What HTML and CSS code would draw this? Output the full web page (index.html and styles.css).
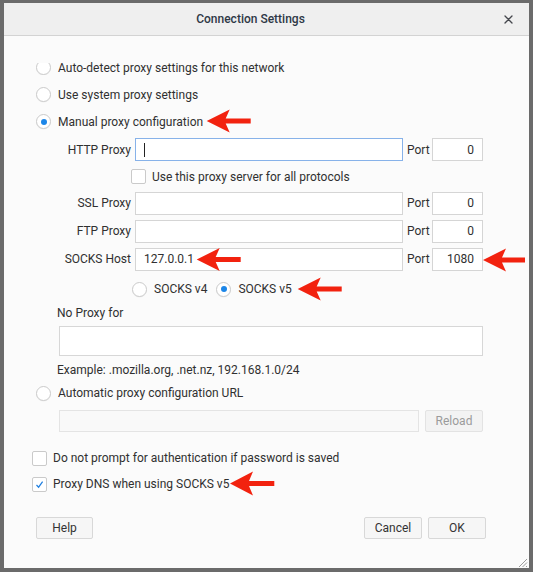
FILE: index.html
```html
<!DOCTYPE html>
<html>
<head>
<meta charset="utf-8">
<title>Connection Settings</title>
<link rel="stylesheet" href="styles.css">
</head>
<body>
<div class="window">
  <div class="titlebar">
    <div class="title">Connection Settings</div>
    <div class="close">
      <svg width="9" height="9" viewBox="0 0 9 9"><path d="M1 1L8 8M8 1L1 8" stroke="#45474d" stroke-width="1.3" stroke-linecap="round"/></svg>
    </div>
  </div>
  <div class="content">
    <div class="radio-row r1"><span class="radio-clip"><span class="radio"></span></span><span>Auto-detect proxy settings for this network</span></div>
    <div class="radio-row r2"><span class="radio"></span><span>Use system proxy settings</span></div>
    <div class="radio-row r3"><span class="radio on"></span><span>Manual proxy configuration</span></div>

    <div class="proxy-row http">
      <span class="plabel">HTTP Proxy</span>
      <div class="input host focus"><span class="caret"></span></div>
      <span class="port-label">Port</span>
      <div class="input port">0</div>
    </div>
    <div class="check-row share"><span class="check"></span><span>Use this proxy server for all protocols</span></div>
    <div class="proxy-row">
      <span class="plabel">SSL Proxy</span>
      <div class="input host"></div>
      <span class="port-label">Port</span>
      <div class="input port">0</div>
    </div>
    <div class="proxy-row">
      <span class="plabel">FTP Proxy</span>
      <div class="input host"></div>
      <span class="port-label">Port</span>
      <div class="input port">0</div>
    </div>
    <div class="proxy-row">
      <span class="plabel">SOCKS Host</span>
      <div class="input host">127.0.0.1</div>
      <span class="port-label">Port</span>
      <div class="input port">1080</div>
    </div>
    <div class="socks-row">
      <span class="radio"></span><span class="v4">SOCKS v4</span>
      <span class="radio on"></span><span>SOCKS v5</span>
    </div>

    <div class="noproxy-label">No Proxy for</div>
    <div class="textarea"></div>
    <div class="example">Example: .mozilla.org, .net.nz, 192.168.1.0/24</div>

    <div class="radio-row auto"><span class="radio"></span><span>Automatic proxy configuration URL</span></div>
    <div class="url-row">
      <div class="input url disabled"></div>
      <div class="btn reload">Reload</div>
    </div>

    <div class="check-row prompt"><span class="check"></span><span>Do not prompt for authentication if password is saved</span></div>
    <div class="check-row dns">
      <span class="check"><svg width="13" height="13" viewBox="0 0 13 13"><path d="M3.5 7L5.6 9.2L9.6 3.6" fill="none" stroke="#1f7fe0" stroke-width="1.2"/></svg></span>
      <span>Proxy DNS when using SOCKS v5</span>
    </div>

    <div class="buttons">
      <div class="btn help">Help</div>
      <div class="right">
        <div class="btn cancel">Cancel</div>
        <div class="btn ok">OK</div>
      </div>
    </div>
  </div>

  <svg class="overlay" width="525" height="565" viewBox="0 0 525 565">
    <g fill="#f2220f">
      <polygon points="202.7,118 225.7,106.5 221.7,115.5 246.7,115.5 246.7,120.5 221.7,120.5 225.7,129.5"/>
      <polygon points="192.7,256.5 215.7,245 211.7,254 236.7,254 236.7,259 211.7,259 215.7,268"/>
      <polygon points="479,257 502,245.5 498,254.5 521,254.5 521,259.5 498,259.5 502,268.5"/>
      <polygon points="293.7,286 316.7,274.5 312.7,283.5 337.7,283.5 337.7,288.5 312.7,288.5 316.7,297.5"/>
      <polygon points="226,480.5 249,468.5 245,478 270.3,478 270.3,483 245,483 249,492.5"/>
    </g>
    <g stroke="#9a9a9a" stroke-width="1">
      <path d="M523 556L515 564M523 559.5L518.5 564M523 563L522 564"/>
    </g>
  </svg>
</div>
</body>
</html>
```

FILE: styles.css
```css
html, body {
  margin: 0;
}

body {
  background: #6b6b6b;
  padding: 3px 4px 4px 4px;
  height: 572px;
  box-sizing: border-box;
  font-family: Roboto, "Liberation Sans", Arial, sans-serif;
  font-size: 12px;
  color: #303030;
}

.window {
  width: 525px;
  height: 565px;
  background: #fbfbfb;
  position: relative;
  display: flex;
  flex-direction: column;
  overflow: hidden;
}

.titlebar {
  height: 32px;
  flex-shrink: 0;
  background: #efefef;
  border-bottom: 1px solid #d3d3d3;
  display: flex;
  align-items: center;
}

.title {
  flex: 1;
  text-align: center;
  padding-left: 5px;
  font-weight: 500;
  font-size: 12px;
  color: #2e3846;
}

.close {
  width: 32px;
  margin-right: 5px;
  display: flex;
  justify-content: center;
  align-items: center;
}

.close svg {
  display: block;
}

.content {
  padding: 19px 0 0 28px;
  display: flex;
  flex-direction: column;
}

.radio-row {
  display: flex;
  align-items: center;
  padding-left: 4px;
}

.r1 { height: 26px; }
.r2 { height: 27px; }
.r3 { height: 27px; }

.radio-clip {
  width: 15px;
  height: 12px;
  overflow: hidden;
  align-self: flex-end;
  margin-bottom: 6px;
  margin-right: 7px;
  display: flex;
  align-items: flex-end;
  flex-shrink: 0;
}

.radio-clip .radio {
  margin-right: 0;
}

.radio {
  width: 15px;
  height: 15px;
  box-sizing: border-box;
  border: 1px solid #cbcbcb;
  border-radius: 50%;
  background: #fff;
  margin-right: 7px;
  flex-shrink: 0;
  display: flex;
  align-items: center;
  justify-content: center;
  box-shadow: 0 0.5px 0.5px rgba(0, 0, 0, 0.06);
}

.radio.on::after {
  content: "";
  width: 6px;
  height: 6px;
  border-radius: 50%;
  background: #1c86e8;
}

.proxy-row {
  display: flex;
  align-items: center;
  height: 28px;
  margin-left: 25px;
}

.proxy-row.http {
  height: 29px;
}

.plabel {
  width: 74px;
  text-align: right;
  margin-right: 4px;
  flex-shrink: 0;
}

.input {
  height: 23px;
  box-sizing: border-box;
  border: 1px solid #d5d5d5;
  background: #fff;
  display: flex;
  align-items: center;
}

.input.host {
  width: 268px;
  padding-left: 8px;
}

.input.focus {
  border-color: #87b2e9;
}

.caret {
  width: 1px;
  height: 14px;
  background: #222;
}

.port-label {
  width: 22px;
  margin: 0 3px 0 4px;
}

.input.port {
  width: 51px;
  justify-content: flex-end;
  padding-right: 8px;
}

.check-row {
  display: flex;
  align-items: center;
}

.check-row.share {
  height: 25px;
  padding-left: 99px;
}

.check {
  width: 15px;
  height: 15px;
  box-sizing: border-box;
  border: 1px solid #cacaca;
  border-radius: 2px;
  background: #fff;
  margin-right: 6px;
  flex-shrink: 0;
  display: flex;
  align-items: center;
  justify-content: center;
}

.check svg {
  display: block;
}

.socks-row {
  height: 32px;
  display: flex;
  align-items: center;
  padding-left: 100px;
}

.socks-row .v4 {
  margin-right: 9px;
}

.noproxy-label {
  height: 16px;
  line-height: 16px;
  padding-left: 25px;
}

.textarea {
  margin-top: 5px;
  margin-left: 27px;
  width: 424px;
  height: 30px;
  box-sizing: border-box;
  border: 1px solid #d7d7d7;
  background: #fff;
}

.example {
  height: 28px;
  line-height: 28px;
  padding-left: 25px;
}

.radio-row.auto {
  height: 18px;
}

.url-row {
  margin-top: 8px;
  margin-left: 27px;
  display: flex;
  gap: 6px;
  height: 22px;
}

.input.url {
  width: 360px;
  height: 22px;
}

.input.disabled {
  background: #f9f9f9;
  border-color: #e4e4e4;
}

.btn {
  height: 22px;
  box-sizing: border-box;
  border: 1px solid #d8d8d8;
  border-radius: 2px;
  background: #f6f6f6;
  display: flex;
  align-items: center;
  justify-content: center;
  color: #333;
  font-size: 12px;
}

.btn.reload {
  width: 58px;
  color: #9b9b9b;
  background: #f3f3f3;
  border-color: #e3e3e3;
}

.check-row.prompt {
  margin-top: 13px;
  height: 26px;
}

.check-row.dns {
  height: 26px;
}

.buttons {
  margin-top: 20px;
  width: 450px;
  margin-left: 4px;
  display: flex;
  justify-content: space-between;
}

.buttons .right {
  display: flex;
  gap: 6px;
}

.btn.help {
  width: 57px;
}

.btn.cancel,
.btn.ok {
  width: 58px;
}

.overlay {
  position: absolute;
  left: 0;
  top: 0;
  pointer-events: none;
}
```
